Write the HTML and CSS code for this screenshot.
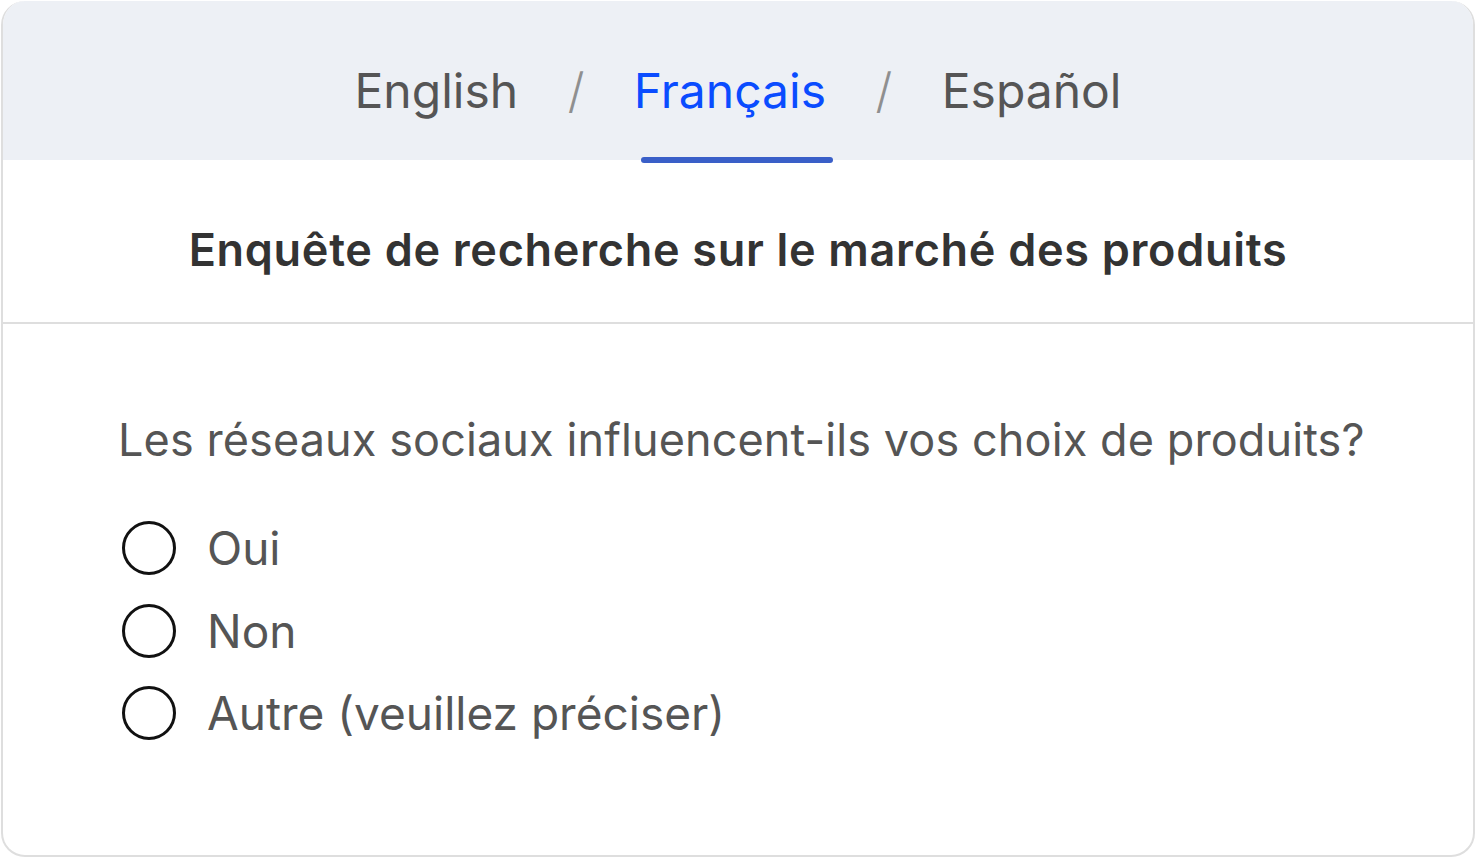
FILE: index.html
```html
<!DOCTYPE html>
<html lang="fr">
  <head>
    <meta charset="UTF-8" />
    <meta name="viewport" content="width=device-width, initial-scale=1.0" />
    <title>Enquête</title>
    <link rel="stylesheet" href="styles.css">
  </head>
  <body>
    <div class="card">
      <div class="lang-bar">
        <span class="lang">English</span>
        <span class="sep">/</span>
        <span class="lang active">Français</span>
        <span class="sep">/</span>
        <span class="lang">Español</span>
      </div>
      <div class="survey-title">Enquête de recherche sur le marché des produits</div>
      <div class="survey-body">
        <p class="question">Les réseaux sociaux influencent-ils vos choix de produits?</p>
        <ul class="options">
          <li class="option"><span class="radio"></span>Oui</li>
          <li class="option"><span class="radio"></span>Non</li>
          <li class="option"><span class="radio"></span>Autre (veuillez préciser)</li>
        </ul>
      </div>
    </div>
  </body>
</html>
```

FILE: styles.css
```css
body {
  margin: 0;
  background-color: #fff;
  font-family: Inter, "Noto Sans", sans-serif;
}

.card {
  margin: 1px;
  width: 1474px;
  height: 856px;
  box-sizing: border-box;
  border-radius: 24px;
  overflow: hidden;
  border: 2px solid #dedede;
  border-top: none;
  display: flex;
  flex-direction: column;
}

.lang-bar {
  height: 159px;
  flex-shrink: 0;
  margin: 0 -2px;
  background-color: #edf0f5;
  display: flex;
  align-items: center;
  justify-content: center;
  gap: 49.5px;
  font-size: 48px;
  color: #555;
  padding: 20px 0 0 0;
  box-sizing: border-box;
}

.lang {
  position: relative;
}

.lang.active {
  color: #0a4cff;
}

/* soulignement de l'onglet actif */
.lang.active::after {
  content: "";
  position: absolute;
  left: 7px;
  width: 192px;
  height: 6px;
  bottom: -43px;
  border-radius: 3px;
  background-color: #3a5fc8;
}

.sep {
  color: #8f8f8f;
  font-weight: 300;
}

.survey-title {
  height: 164px;
  flex-shrink: 0;
  box-sizing: border-box;
  padding-top: 16px;
  display: flex;
  align-items: center;
  justify-content: center;
  font-size: 45px;
  font-weight: 600;
  color: #333;
  letter-spacing: 0.7px;
  border-bottom: 2px solid #dedede;
}

.survey-body {
  padding: 88px 0 0 115px;
}

.question {
  margin: 0 0 40px;
  font-size: 45px;
  color: #555;
  letter-spacing: 0.1px;
}

.options {
  list-style: none;
  margin: 0;
  padding: 0;
}

.option {
  display: flex;
  align-items: center;
  gap: 31px;
  height: 82.5px;
  font-size: 46px;
  color: #555;
}

.radio {
  width: 54px;
  height: 54px;
  box-sizing: border-box;
  border: 3px solid #111;
  border-radius: 50%;
  margin-left: 4px;
}
```
